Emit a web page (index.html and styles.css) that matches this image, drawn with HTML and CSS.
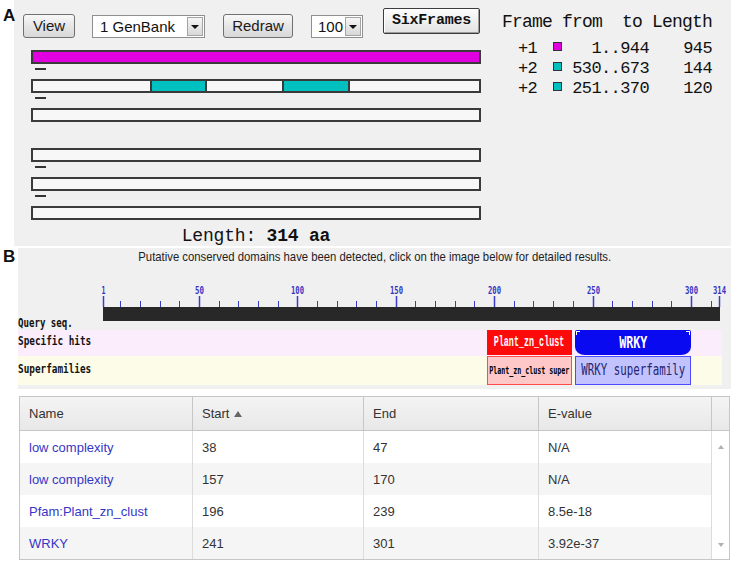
FILE: index.html
```html
<!DOCTYPE html>
<html>
<head>
<meta charset="utf-8">
<title>Six frames and conserved domains</title>
<link rel="stylesheet" href="styles.css">
</head>
<body>
<div class="figure">
  <span class="fig-label label-a">A</span>
  <section class="panel-a">
    <div class="pa-left">
      <div class="controls">
        <button class="btn btn-view">View</button>
        <div class="select sel-gb"><span>1 GenBank</span><span class="sel-arrow"></span></div>
        <button class="btn btn-redraw">Redraw</button>
        <div class="select sel-100"><span>100</span><span class="sel-arrow"></span></div>
        <button class="btn-six">SixFrames</button>
      </div>
      <div class="tracks">
        <div class="track"><div class="bar bar-full"></div><span class="dash"></span></div>
        <div class="track"><div class="bar"><span class="seg" style="left:117px;width:57px"></span><span class="seg" style="left:249px;width:68px"></span></div><span class="dash"></span></div>
        <div class="track track-gap"><div class="bar"></div></div>
        <div class="track"><div class="bar"></div><span class="dash"></span></div>
        <div class="track"><div class="bar"></div><span class="dash"></span></div>
        <div class="track track-last"><div class="bar"></div></div>
      </div>
      <div class="length">Length: <b>314 aa</b></div>
    </div>
    <div class="frames">
      <div class="fr-head">Frame from  to Length</div>
      <div class="fr-rows">
        <div class="fr-row"><span>+1</span><span class="sq sq-m"></span><span class="fr-r">1..944</span><span class="fr-r">945</span></div>
        <div class="fr-row"><span>+2</span><span class="sq sq-c"></span><span class="fr-r">530..673</span><span class="fr-r">144</span></div>
        <div class="fr-row"><span>+2</span><span class="sq sq-c"></span><span class="fr-r">251..370</span><span class="fr-r">120</span></div>
      </div>
    </div>
  </section>

  <span class="fig-label label-b">B</span>
  <section class="panel-b">
    <div class="caption"><span class="caption-text">Putative conserved domains have been detected, click on the image below for detailed results.</span></div>
    <div class="ruler">
      <div class="qlabel"><span class="pix pix-q">Query seq.</span></div>
      <svg class="scale" width="624" height="40" viewBox="0 0 624 40">
        <g text-anchor="middle" font-family="DejaVu Sans Mono, monospace" font-weight="bold" font-size="10" fill="#3333c4">
          <text x="3.5" y="11" textLength="4" lengthAdjust="spacingAndGlyphs">1</text>
          <text x="99.5" y="11" textLength="9" lengthAdjust="spacingAndGlyphs">50</text>
          <text x="197.5" y="11" textLength="13" lengthAdjust="spacingAndGlyphs">100</text>
          <text x="296.5" y="11" textLength="13" lengthAdjust="spacingAndGlyphs">150</text>
          <text x="394.5" y="11" textLength="13" lengthAdjust="spacingAndGlyphs">200</text>
          <text x="493.5" y="11" textLength="13" lengthAdjust="spacingAndGlyphs">250</text>
          <text x="591.5" y="11" textLength="13" lengthAdjust="spacingAndGlyphs">300</text>
          <text x="619.5" y="11" textLength="13" lengthAdjust="spacingAndGlyphs">314</text>
        </g>
        <path stroke="#3c3cc8" stroke-width="1" fill="none" d="M20.5 18V24M40.5 18V24M60.5 18V24M79.5 18V24M119.5 18V24M138.5 18V24M158.5 18V24M178.5 18V24M217.5 18V24M237.5 18V24M256.5 18V24M276.5 18V24M315.5 18V24M335.5 18V24M355.5 18V24M374.5 18V24M414.5 18V24M433.5 18V24M453.5 18V24M473.5 18V24M512.5 18V24M532.5 18V24M552.5 18V24M571.5 18V24M611.5 18V24"/>
        <path stroke="#3c3cc8" stroke-width="1.5" fill="none" d="M3.5 13V24M99.5 13V24M197.5 13V24M296.5 13V24M394.5 13V24M493.5 13V24M591.5 13V24M619.5 13V24"/>
        <rect x="3" y="24" width="617" height="14" fill="#282828"/>
      </svg>
    </div>
    <div class="hitrow hits">
      <div class="hlabel"><span class="pix pix-l">Specific hits</span></div>
      <div class="htrack">
        <div class="dom dom-plant" style="left:384px;width:85px"><span class="pix pix-plant">Plant_zn_clust</span></div>
        <div class="dom dom-wrky" style="left:472px;width:116px"><span class="pix pix-wrky">WRKY</span></div>
      </div>
    </div>
    <div class="hitrow supers">
      <div class="hlabel"><span class="pix pix-l">Superfamilies</span></div>
      <div class="htrack">
        <div class="dom dom-plant-sf" style="left:384px;width:85px"><span class="pix pix-plant-sf">Plant_zn_clust super</span></div>
        <div class="dom dom-wrky-sf" style="left:472px;width:116px"><span class="pix pix-wrky-sf">WRKY superfamily</span></div>
      </div>
    </div>
  </section>

  <section class="tbl">
    <div class="thead">
      <div class="th">Name</div>
      <div class="th">Start<span class="sort-up"></span></div>
      <div class="th">End</div>
      <div class="th">E-value</div>
      <div class="th"></div>
    </div>
    <div class="tbody">
      <div class="rows">
        <div class="tr"><div class="td"><a class="lnk">low complexity</a></div><div class="td">38</div><div class="td">47</div><div class="td">N/A</div></div>
        <div class="tr alt"><div class="td"><a class="lnk">low complexity</a></div><div class="td">157</div><div class="td">170</div><div class="td">N/A</div></div>
        <div class="tr"><div class="td"><a class="lnk">Pfam:Plant_zn_clust</a></div><div class="td">196</div><div class="td">239</div><div class="td">8.5e-18</div></div>
        <div class="tr alt"><div class="td"><a class="lnk">WRKY</a></div><div class="td">241</div><div class="td">301</div><div class="td">3.92e-37</div></div>
      </div>
      <div class="scroll"><span class="arr-up"></span><span class="arr-down"></span></div>
    </div>
  </section>
</div>
</body>
</html>
```

FILE: styles.css
```css
* { box-sizing: border-box; margin: 0; padding: 0; }

body {
  width: 731px;
  height: 562px;
  overflow: hidden;
  background: #fff;
  font-family: "Liberation Sans", Arial, sans-serif;
  color: #222;
}

.figure { position: relative; width: 731px; }

.fig-label {
  position: absolute;
  left: 3px;
  font: bold 17px/17px "Liberation Sans", Arial, sans-serif;
  color: #111;
  z-index: 2;
}
.label-a { top: 7px; }
.label-b { top: 248px; }

/* ---------- Panel A ---------- */
.panel-a {
  margin-left: 14px;
  height: 246px;
  background: #f0f0f0;
  display: flex;
  padding: 8px 0 0 9px;
}
.pa-left { flex: 0 0 479px; }

.controls { display: flex; align-items: flex-start; height: 30px; }

.btn {
  height: 24px;
  margin-top: 6px;
  border: 1px solid #707070;
  border-radius: 3px;
  background: linear-gradient(#f8f8f8, #e6e6e6 50%, #d8d8d8);
  font: 15px/22px "Liberation Sans", Arial, sans-serif;
  color: #1a1a1a;
  text-align: center;
}
.btn-view { width: 52px; }
.btn-redraw { width: 70px; margin-left: 18px; }

.select {
  height: 23px;
  margin-top: 7px;
  border: 1px solid #8f8f8f;
  background: #fff;
  display: flex;
  align-items: center;
  justify-content: space-between;
  padding: 0 1px 0 7px;
  font: 15px/21px "Liberation Sans", Arial, sans-serif;
  color: #111;
}
.sel-gb { width: 113px; margin-left: 17px; }
.sel-100 { width: 52px; margin-left: 18px; padding-left: 6px; }
.sel-arrow {
  width: 16px;
  height: 19px;
  border: 1px solid #a4a4a4;
  background: linear-gradient(#f6f6f6, #d8d8d8);
  display: flex;
  align-items: center;
  justify-content: center;
}
.sel-arrow::after {
  content: "";
  border-left: 4px solid transparent;
  border-right: 4px solid transparent;
  border-top: 4px solid #111;
}

.btn-six {
  width: 97px;
  height: 26px;
  margin-left: 20px;
  border: 1px solid #3c3c3c;
  border-radius: 2px;
  background: linear-gradient(#fdfdfd, #e2e2e2);
  box-shadow: inset 1px 1px 0 #fff, inset -1px -1px 0 #9c9c9c;
  font: bold 15px/24px "Liberation Mono", monospace;
  letter-spacing: -0.2px;
  color: #111;
}

.tracks { margin: 12px 0 0 8px; width: 450px; }
.track { height: 29px; }
.track-gap { height: 40px; }
.track-last { height: 14px; }
.bar {
  position: relative;
  height: 14px;
  border: 2px solid #3a3a3a;
  background: #f7f7f7;
}
.bar-full { background: #e000e0; }
.seg {
  position: absolute;
  top: -2px;
  bottom: -2px;
  background: #00c0c0;
  border: 2px solid #3a3a3a;
}
.dash {
  display: block;
  margin: 4px 0 0 4px;
  width: 11px;
  height: 2px;
  background: #333;
}

.length {
  margin: 7px 0 0 8px;
  width: 450px;
  text-align: center;
  font: 18px/19px "Liberation Mono", monospace;
  letter-spacing: -0.2px;
  color: #111;
}
.length b { font-weight: bold; }

.frames { margin-top: 4px; color: #111; }
.fr-head {
  font: 18px/20px "Liberation Mono", monospace;
  letter-spacing: -0.8px;
  white-space: pre;
}
.fr-rows { margin-top: 7px; }
.fr-row {
  display: grid;
  grid-template-columns: 35px 10px 86px 63px;
  padding-left: 16px;
  height: 20px;
  font: 17px/20px "Liberation Mono", monospace;
  letter-spacing: -0.6px;
}
.fr-r { text-align: right; }
.sq {
  width: 9px;
  height: 9px;
  margin-top: 3px;
  border: 1px solid #333;
}
.sq-m { background: #e000e0; }
.sq-c { background: #00c0c0; }

/* ---------- Panel B ---------- */
.panel-b {
  margin: 2px 0 0 18px;
  background: #f0f0f0;
  padding-bottom: 4px;
}
.caption {
  height: 18px;
  text-align: center;
  font: 13px/18px "Liberation Sans", Arial, sans-serif;
  color: #1e1e1e;
}
.caption-text {
  display: inline-block;
  white-space: nowrap;
  transform: scaleX(0.87);
  transform-origin: 50% 50%;
}

.pix {
  display: inline-block;
  white-space: nowrap;
  font-family: "DejaVu Sans Mono", monospace;
  flex-shrink: 0;
}

.ruler { display: flex; height: 47px; margin-top: 17px; }
.qlabel { width: 82px; padding-top: 30px; }
.pix-q {
  font-size: 13px;
  line-height: 15px;
  font-weight: bold;
  color: #111;
  transform: scaleX(0.7);
  transform-origin: 0 50%;
}
.scale { display: block; overflow: visible; }

.hitrow { display: flex; width: 704px; align-items: flex-start; }
.hits { height: 26px; background: #fcedfc; }
.supers { height: 29px; background: #fcfce8; }
.hlabel { width: 85px; }
.hits .hlabel { padding-top: 1px; }
.supers .hlabel { padding-top: 3px; }
.pix-l {
  font-size: 13px;
  line-height: 15px;
  font-weight: bold;
  color: #111;
  transform: scaleX(0.72);
  transform-origin: 0 50%;
}

.htrack { position: relative; width: 619px; height: 100%; }
.dom {
  position: absolute;
  top: 0;
  display: flex;
  align-items: center;
  justify-content: center;
}
.dom-plant { height: 25px; background: #ff0a0a; color: #fff; }
.dom-wrky {
  height: 25px;
  background: #0a0af0;
  color: #fff;
  border-radius: 2px 2px 10px 10px / 2px 2px 8px 8px;
}
.dom-wrky::before,
.dom-wrky::after {
  content: "";
  position: absolute;
  top: 1px;
  width: 3px;
  height: 3px;
  border-top: 1px solid #fff;
}
.dom-wrky::before { left: 1px; border-left: 1px solid #fff; }
.dom-wrky::after { right: 1px; border-right: 1px solid #fff; }
.dom-plant-sf {
  height: 29px;
  background: #ffc8c8;
  border: 1px solid #ff4a4a;
  color: #000;
}
.dom-wrky-sf {
  height: 29px;
  background: #c2c2ff;
  border: 1px solid #4c4cff;
  color: #26266e;
}
.pix-plant {
  font-family: "Liberation Mono", monospace;
  font-size: 15px;
  line-height: 20px;
  font-weight: bold;
  transform: scaleX(0.56);
}
.pix-wrky { font-size: 16px; line-height: 18px; font-weight: bold; transform: scaleX(0.73); }
.pix-plant-sf { font-size: 10px; line-height: 12px; font-weight: bold; transform: scaleX(0.665); }
.pix-wrky-sf { font-size: 15px; line-height: 17px; transform: scaleX(0.72); }

/* ---------- Table ---------- */
.tbl {
  margin: 7px 0 0 19px;
  width: 711px;
  border: 1px solid #c6c6c6;
  font: 13px "Liberation Sans", Arial, sans-serif;
  color: #333;
  background: #fff;
}
.thead {
  display: grid;
  grid-template-columns: 173px 171px 175px 173px 17px;
  height: 34px;
  border-bottom: 1px solid #c6c6c6;
  background: linear-gradient(#f4f4f4, #e8e8e8);
}
.th {
  display: flex;
  align-items: center;
  padding-left: 9px;
  border-right: 1px solid #c6c6c6;
}
.th:last-child { border-right: 0; }
.sort-up {
  margin-left: 5px;
  border-left: 4px solid transparent;
  border-right: 4px solid transparent;
  border-bottom: 6px solid #666;
}

.tbody { display: flex; }
.rows { display: flex; flex-direction: column; }
.tr {
  display: grid;
  grid-template-columns: 173px 171px 175px 173px;
  height: 32px;
}
.tr.alt { background: #f5f5f5; }
.td {
  display: flex;
  align-items: center;
  padding-left: 9px;
  border-right: 1px solid #dcdcdc;
}
.lnk { color: #3636c6; text-decoration: none; }

.scroll {
  width: 17px;
  display: flex;
  flex-direction: column;
  justify-content: space-between;
  align-items: center;
  padding: 14px 0 12px;
}
.arr-up {
  border-left: 3.5px solid transparent;
  border-right: 3.5px solid transparent;
  border-bottom: 4px solid #b0b0b0;
}
.arr-down {
  border-left: 3.5px solid transparent;
  border-right: 3.5px solid transparent;
  border-top: 4px solid #b0b0b0;
}
```
